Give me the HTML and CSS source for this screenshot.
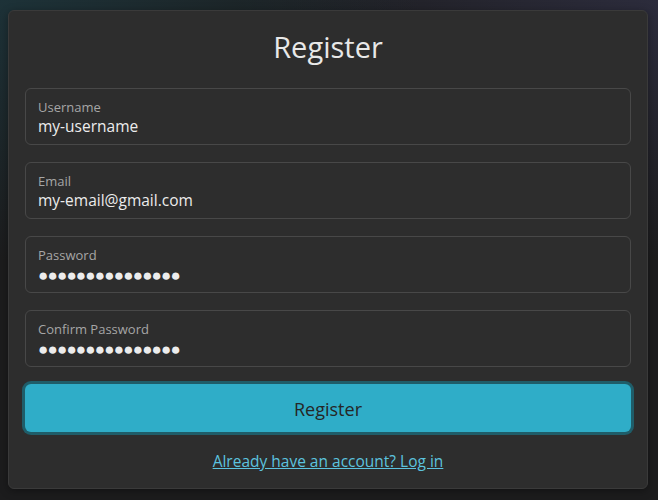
FILE: index.html
```html
<!DOCTYPE html>
<html lang="en">
<head>
<meta charset="utf-8">
<title>Register</title>
<link rel="stylesheet" href="styles.css">
</head>
<body>
<main class="card">
  <h1 class="title">Register</h1>
  <form class="form">
    <label class="field">
      <span class="field-label">Username</span>
      <span class="field-value">my-username</span>
    </label>
    <label class="field">
      <span class="field-label">Email</span>
      <span class="field-value">my-email@gmail.com</span>
    </label>
    <label class="field">
      <span class="field-label">Password</span>
      <span class="field-value dots">●●●●●●●●●●●●●●●</span>
    </label>
    <label class="field">
      <span class="field-label">Confirm Password</span>
      <span class="field-value dots">●●●●●●●●●●●●●●●</span>
    </label>
    <button type="button" class="submit">Register</button>
  </form>
  <a class="login-link" href="#">Already have an account? Log in</a>
</main>
</body>
</html>
```
FILE: styles.css
```css
html, body {
  margin: 0;
  height: 500px;
}
body {
  font-family: "Open Sans", "Noto Sans", sans-serif;
  background:
    radial-gradient(ellipse 420px 260px at 0% 0%, #1d3238 0%, rgba(29,50,56,0) 100%),
    radial-gradient(ellipse 420px 260px at 100% 0%, #2c2c3c 0%, rgba(44,44,60,0) 100%),
    #1c1c1d;
  padding: 10px 10px 0 8px;
  box-sizing: border-box;
}
.card {
  width: 640px;
  height: 479px;
  box-sizing: border-box;
  background: #2d2d2d;
  border: 1px solid #3a3a3a;
  border-radius: 6px;
  padding: 16px;
  display: flex;
  flex-direction: column;
  align-items: center;
  box-shadow: 0 2px 8px rgba(0,0,0,0.35);
}
.title {
  margin: 0 0 21px;
  font-size: 29px;
  line-height: 40px;
  font-weight: 400;
  color: #e8e8e8;
}
.form {
  align-self: stretch;
  display: flex;
  flex-direction: column;
  gap: 17px;
}
.field {
  display: flex;
  flex-direction: column;
  border: 1px solid #484848;
  border-radius: 6px;
  padding: 9px 12px 8px;
  height: 57px;
  box-sizing: border-box;
}
.field-label {
  font-size: 13px;
  line-height: 18px;
  color: #a6a6a6;
}
.field-value {
  font-size: 15.5px;
  line-height: 20px;
  color: #ececec;
}
.dots {
  font-size: 17px;
  letter-spacing: -0.8px;
  line-height: 21px;
  color: #ececec;
}
.submit {
  height: 48px;
  border: none;
  border-radius: 6px;
  background: #2fadc8;
  box-shadow: 0 0 0 3px #1f5d69;
  color: #262626;
  font-family: inherit;
  font-size: 18px;
  padding-top: 3px;
  cursor: pointer;
}
.login-link {
  margin-top: 18px;
  font-size: 15.5px;
  line-height: 22px;
  color: #5cc3df;
  text-decoration: underline;
}
```
